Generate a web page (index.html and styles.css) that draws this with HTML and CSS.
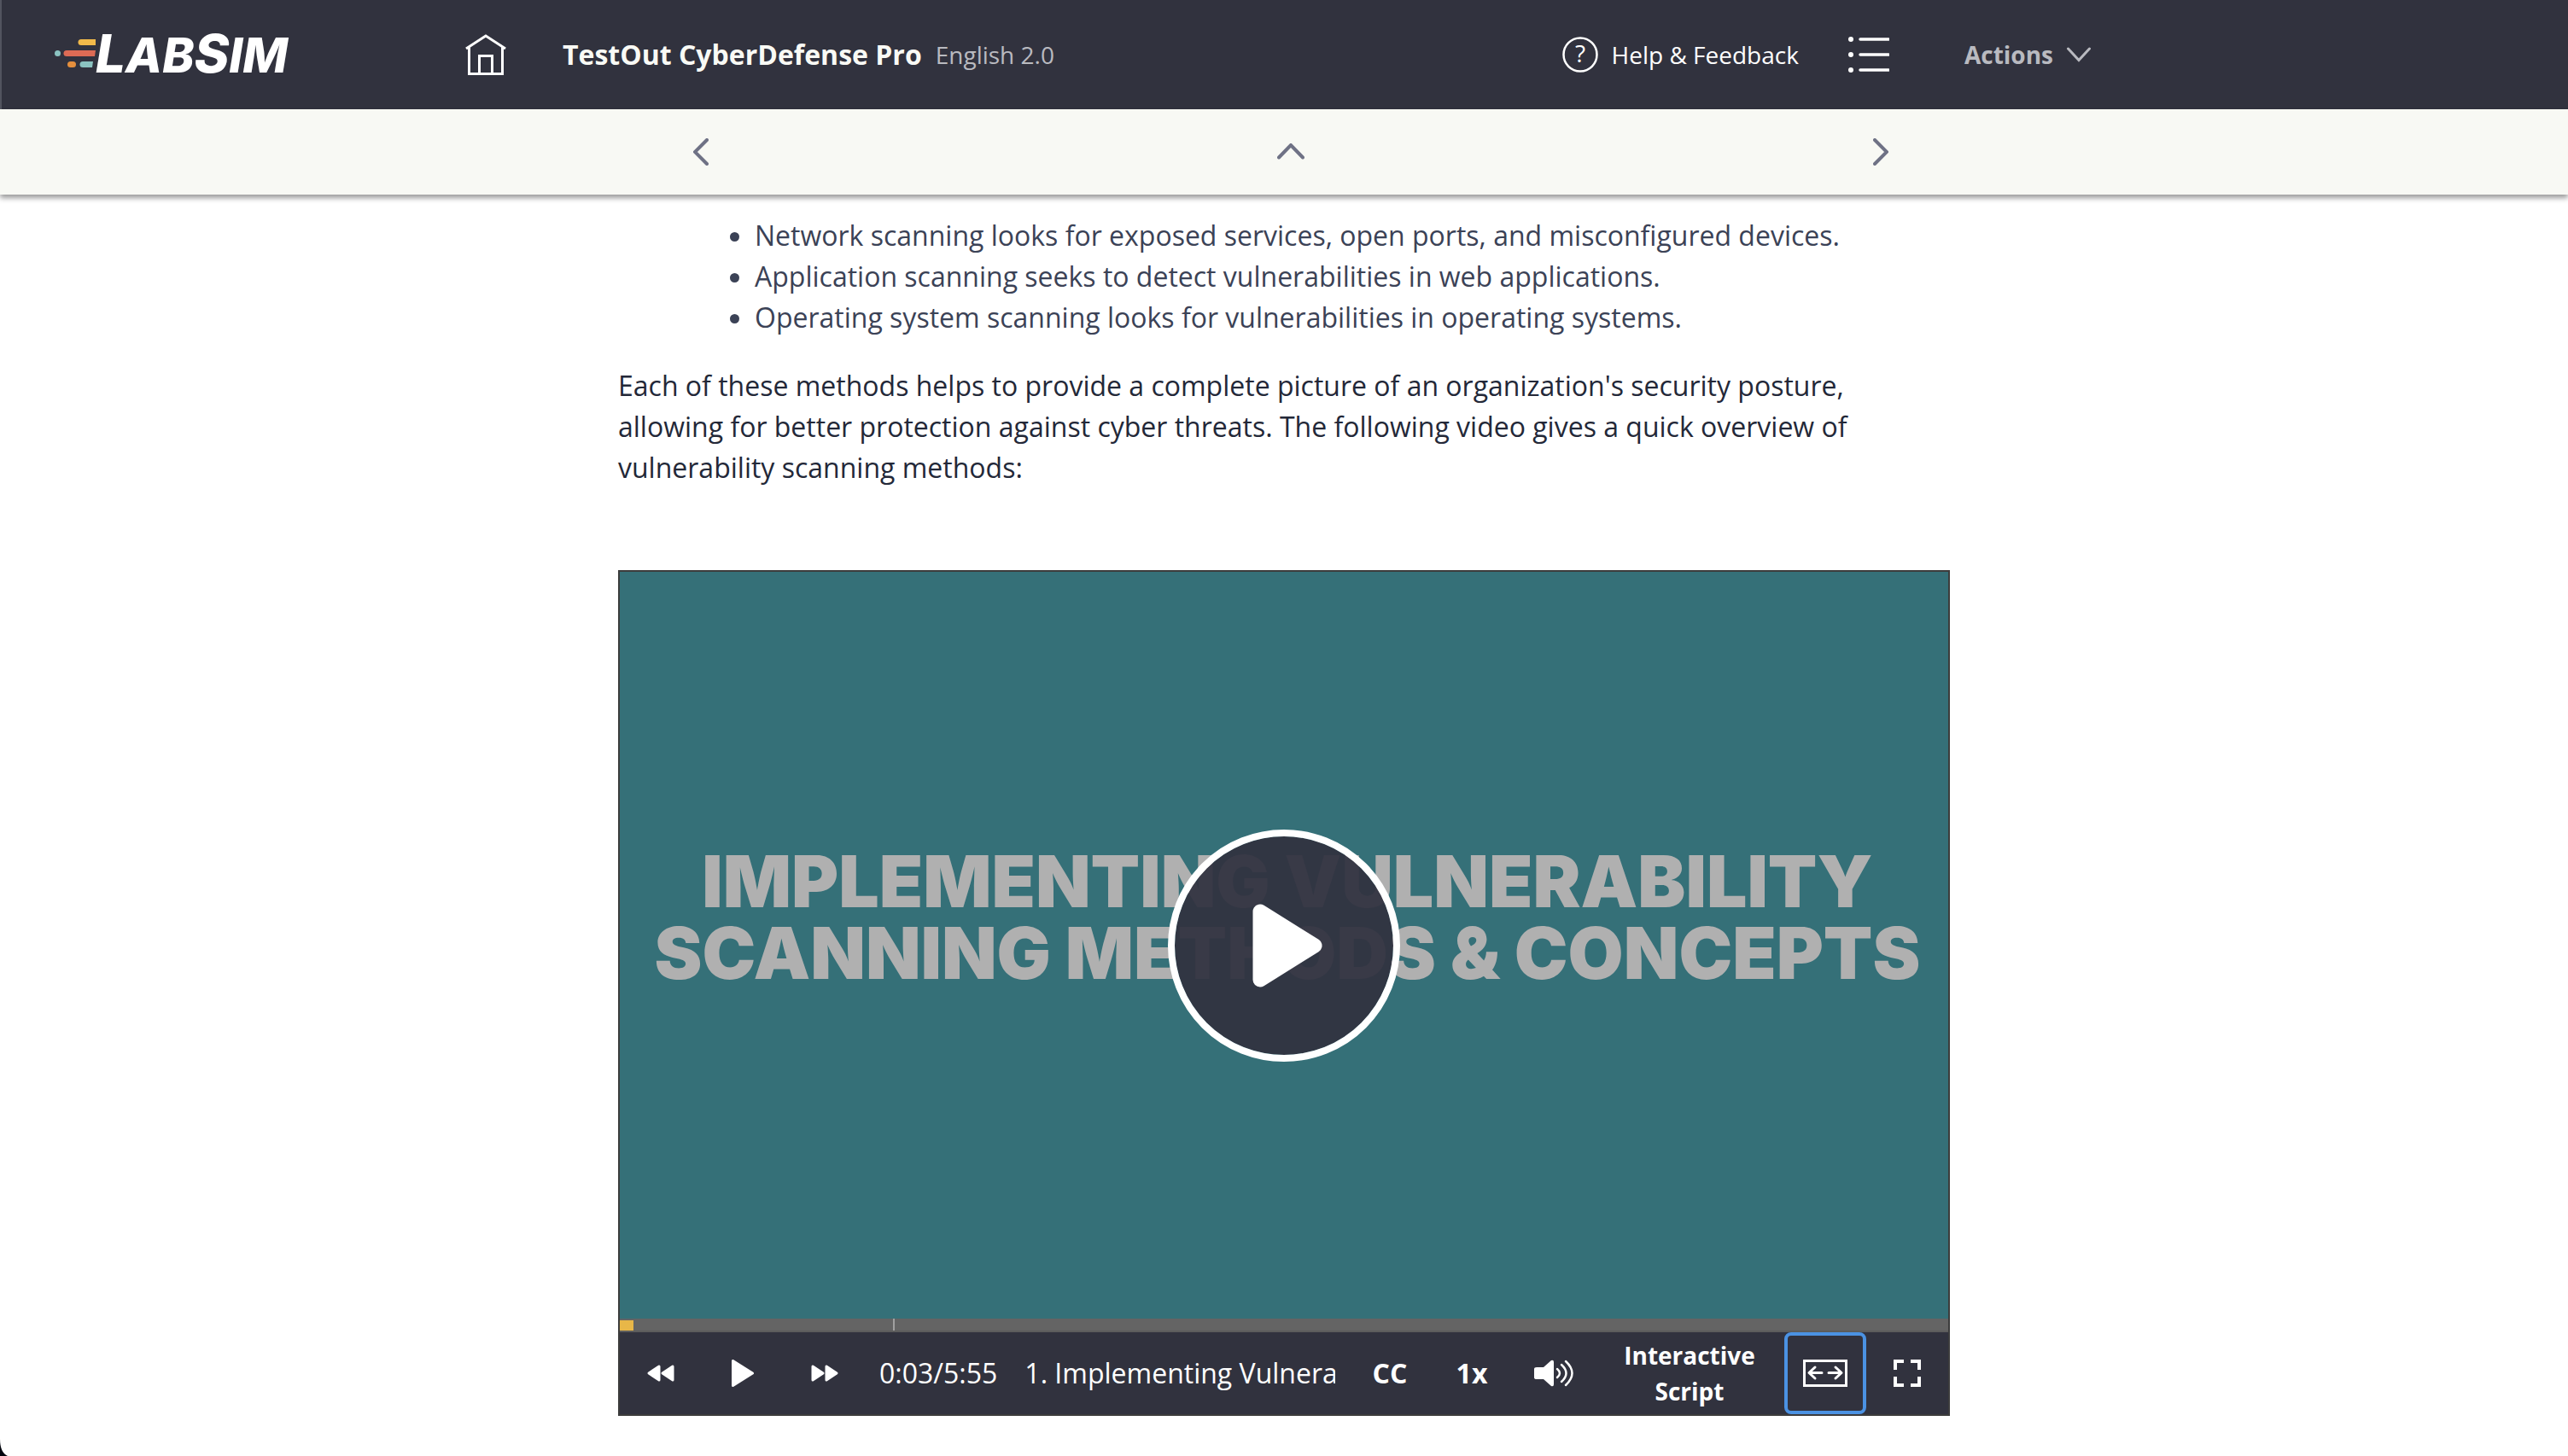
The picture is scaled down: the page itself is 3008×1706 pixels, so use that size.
FILE: index.html
```html
<!DOCTYPE html>
<html lang="en">
<head>
  <meta charset="UTF-8">
  <title>TestOut CyberDefense Pro</title>
  <meta name="viewport" content="width=device-width, initial-scale=1.0">
  <link rel="stylesheet" href="styles.css">
</head>
<body>

<header class="header">
  <a class="logo" href="#" aria-label="LabSim">
    <svg class="logo-lines" width="48" height="48" viewBox="0 0 48 48">
      <path d="M31 6h19l-1 7H31a3.500 3.500 0 0 1 0-7z" fill="#f1b94a"/>
      <path d="M14 19h34l-1 7H14a3.500 3.500 0 0 1 0-7z" fill="#dd6b55"/>
      <circle cx="3.500" cy="22.500" r="3.500" fill="#8bc3c1"/>
      <rect x="15" y="32" width="10" height="7" rx="3.500" fill="#e58f3d"/>
      <path d="M33 32h12l-1 7H33a3.500 3.500 0 0 1 0-7z" fill="#8bc3c1"/>
    </svg>
    <span class="logo-text"><b>L</b>AB<b>S</b>IM</span>
  </a>

  <div class="header-inner">
    <a class="home" href="#" aria-label="Home">
      <svg width="48" height="48" viewBox="0 0 48 48" fill="none" stroke="#fff" stroke-width="3">
        <path d="M1 17L24 2l23 15M4.500 15v31.500h39V15M16.500 46V25.500h15V46"/>
      </svg>
    </a>
    <h1 class="course">TestOut CyberDefense Pro</h1>
    <span class="edition">English 2.0</span>

    <nav class="header-links">
      <a class="help" href="#">
        <svg width="42" height="44" viewBox="0 0 42 44">
          <circle cx="21" cy="22" r="19.500" fill="none" stroke="#fff" stroke-width="2.500"/>
          <text class="help-mark" x="21" y="31" text-anchor="middle">?</text>
        </svg>
        Help &amp; Feedback
      </a>
      <button class="outline" type="button" aria-label="Course outline">
        <svg width="48" height="44" viewBox="0 0 48 44" stroke="#fff" stroke-width="3.500" stroke-linecap="round">
          <path d="M14 4h33M14 22h33M14 40h33"/>
          <g fill="#fff" stroke="none">
            <circle cx="3" cy="4" r="3"/>
            <circle cx="3" cy="22" r="3"/>
            <circle cx="3" cy="40" r="3"/>
          </g>
        </svg>
      </button>
      <button class="actions" type="button">
        Actions
        <svg width="28" height="18" viewBox="0 0 28 18" fill="none" stroke="#b9bac0" stroke-width="3" stroke-linecap="round">
          <path d="M1.500 2L14 15.500L26.500 2"/>
        </svg>
      </button>
    </nav>
  </div>
</header>

<nav class="pager">
  <div class="pager-inner">
    <button type="button" aria-label="Previous">
      <svg width="18" height="32" viewBox="0 0 18 32"><path d="M16 2L2 16l14 14"/></svg>
    </button>
    <button type="button" aria-label="Up">
      <svg width="32" height="20" viewBox="0 0 32 20"><path d="M2 16.500L16 2l14 14.500"/></svg>
    </button>
    <button type="button" aria-label="Next">
      <svg width="18" height="32" viewBox="0 0 18 32"><path d="M2 2l14 14L2 30"/></svg>
    </button>
  </div>
</nav>

<main class="content">
  <ul class="scan-list">
    <li>Network scanning looks for exposed services, open ports, and misconfigured devices.</li>
    <li>Application scanning seeks to detect vulnerabilities in web applications.</li>
    <li>Operating system scanning looks for vulnerabilities in operating systems.</li>
  </ul>
  <p>Each of these methods helps to provide a complete picture of an organization's security posture, allowing for better protection against cyber threats. The following video gives a quick overview of vulnerability scanning methods:</p>

  <section class="player">
    <div class="screen">
      <div class="slide-title">IMPLEMENTING VULNERABILITY<br>SCANNING METHODS &amp; CONCEPTS</div>
      <button class="big-play" type="button" aria-label="Play video">
        <svg width="84" height="100" viewBox="0 0 84 100">
          <path d="M10 10v80L74 50z" fill="#fff" stroke="#fff" stroke-width="17" stroke-linejoin="round"/>
        </svg>
      </button>
    </div>

    <div class="progress">
      <div class="progress-played"></div>
      <div class="progress-mark"></div>
    </div>

    <div class="controls">
      <button class="control" type="button" aria-label="Rewind">
        <svg width="32" height="20" viewBox="0 0 32 20" fill="#fff" stroke="#fff" stroke-width="3" stroke-linejoin="round">
          <path d="M14 2v16L2 10zM30 2v16L18 10z"/>
        </svg>
      </button>
      <button class="control" type="button" aria-label="Play">
        <svg width="26" height="32" viewBox="0 0 26 32" fill="#fff" stroke="#fff" stroke-width="3" stroke-linejoin="round">
          <path d="M1.500 1.500v29L24.500 16z"/>
        </svg>
      </button>
      <button class="control" type="button" aria-label="Forward">
        <svg width="32" height="20" viewBox="0 0 32 20" fill="#fff" stroke="#fff" stroke-width="3" stroke-linejoin="round">
          <path d="M2 2v16l12-8zM18 2v16l12-8z"/>
        </svg>
      </button>
      <span class="time">0:03/5:55</span>
      <span class="track">1. Implementing Vulnera</span>
      <button class="control" type="button">CC</button>
      <button class="control" type="button">1x</button>
      <button class="control" type="button" aria-label="Volume">
        <svg width="46" height="32" viewBox="0 0 46 32" fill="none" stroke="#fff" stroke-width="2.500" stroke-linecap="round">
          <path d="M3 9h8L20 1q3-1 3 2v26q0 3-3 2l-9-8H3q-3 0-3-2V11q0-2 3-2z" fill="#fff" stroke="none"/>
          <path d="M27 11q6 5 0 10M32 6q11 10 0 20M37 2q15 14 0 28"/>
        </svg>
      </button>
      <button class="script" type="button">Interactive Script</button>
      <button class="control focused" type="button" aria-label="Fit width">
        <svg width="52" height="32" viewBox="0 0 52 32" fill="none" stroke="#fff" stroke-width="3">
          <rect x="1.500" y="1.500" width="49" height="29"/>
          <path d="M22 15.500H7.500M14 9l-7 6.500 7 6.500M30 15.500h14.500M38 9l7 6.500-7 6.500" stroke-linecap="round" stroke-linejoin="round"/>
        </svg>
      </button>
      <button class="control" type="button" aria-label="Full screen">
        <svg width="32" height="32" viewBox="0 0 32 32" fill="none" stroke="#fff" stroke-width="4">
          <path d="M2 12V2h10M20 2h10v10M30 20v10H20M12 30H2V20"/>
        </svg>
      </button>
    </div>
  </section>
</main>

<svg class="window-corner" width="10" height="20" viewBox="0 0 10 20">
  <path d="M0 0q0 16 9 20H0z" fill="#04060f"/>
</svg>

</body>
</html>
```

FILE: styles.css
```css
* {
  box-sizing: border-box;
}

body {
  margin: 0;
  font-family: "Open Sans", sans-serif;
  font-size: 32px;
  line-height: 48px;
  color: #232838;
  background: #fff;
}

a {
  color: inherit;
  text-decoration: none;
}

button {
  display: flex;
  align-items: center;
  justify-content: center;
  padding: 0;
  border: 0;
  background: none;
  color: inherit;
  font: inherit;
  cursor: pointer;
}

svg {
  display: block;
  flex: none;
}

/* header */
.header {
  display: grid;
  grid-template-columns: 1fr minmax(0, 1920px) 1fr;
  align-items: center;
  height: 128px;
  border-left: 2px solid #52545f;
  background: #31323e;
  color: #fff;
}

.logo {
  display: flex;
  align-items: center;
  padding-left: 62px;
}

.logo-text {
  font-family: Inter, sans-serif;
  font-size: 56px;
  font-style: italic;
  font-weight: 800;
  line-height: 48px;
}

.logo-text b {
  font-size: 62px;
  font-weight: 800;
}

.header-inner {
  display: flex;
  align-items: center;
  padding: 0 16px 0 0;
}

.course {
  margin: 0 16px 0 66px;
  font-size: 32px;
  font-weight: 700;
  color: #f9faf5;
}

.edition {
  font-size: 28px;
  color: #b9bac0;
}

.header-links {
  display: flex;
  align-items: center;
  margin-left: auto;
  font-size: 28px;
}

.help {
  display: flex;
  align-items: center;
  gap: 16px;
}

.help-mark {
  font-size: 28px;
  fill: #fff;
}

.outline {
  margin: 0 88px 0 58px;
}

.actions {
  gap: 16px;
  font-weight: 700;
  color: #b9bac0;
}

/* previous / up / next */
.pager {
  height: 100px;
  background: #f8f9f4;
  box-shadow: 0 4px 6px rgba(0, 0, 0, 0.4);
}

.pager-inner {
  display: flex;
  align-items: center;
  justify-content: space-between;
  max-width: 1416px;
  height: 100%;
  margin: 0 auto;
  padding-left: 16px;
}

.pager path {
  fill: none;
  stroke: #6f7285;
  stroke-width: 4;
  stroke-linecap: round;
}

/* lesson text */
.content {
  max-width: 1560px;
  margin: 0 auto;
  padding-top: 24px;
}

.scan-list {
  margin: 0;
  padding-left: 160px;
  color: #3b4256;
}

.content p {
  margin: 32px 0 96px;
}

/* video player */
.player {
  border: 2px solid #3c3c3c;
  color: #fff;
}

.screen {
  position: relative;
  display: flex;
  align-items: center;
  justify-content: center;
  aspect-ratio: 16 / 9;
  background: #357078;
}

.slide-title {
  padding: 0 0 66px 8px;
  font-family: Inter, sans-serif;
  font-size: 84px;
  font-weight: 900;
  line-height: 84px;
  text-align: center;
  white-space: nowrap;
  color: #b0b0b0;
}

.big-play {
  position: absolute;
  inset: 0;
  width: 272px;
  height: 272px;
  margin: auto;
  padding-left: 8px;
  border: 8px solid #fff;
  border-radius: 50%;
  background: rgba(49, 50, 64, 0.94);
  background-clip: padding-box;
}

.progress {
  position: relative;
  height: 16px;
  padding-top: 2px;
  border-bottom: 2px solid #5c5c5c;
  background: #646464;
}

.progress-played {
  width: 1%;
  height: 12px;
  background: #e8b748;
}

.progress-mark {
  position: absolute;
  top: 0;
  left: 320px;
  width: 2px;
  height: 14px;
  background: #a0a0a0;
}

.controls {
  display: flex;
  align-items: center;
  height: 96px;
  background: #31323e;
}

.control {
  flex: none;
  width: 96px;
  height: 96px;
  font-weight: 700;
}

.time {
  padding: 0 16px;
}

.track {
  flex: 1;
  min-width: 0;
  margin: 0 16px;
  overflow: hidden;
  white-space: nowrap;
}

.script {
  flex: none;
  width: 222px;
  padding: 0 32px;
  font-size: 28px;
  font-weight: 700;
  line-height: 42px;
}

.focused {
  border: 4px solid #4b92e3;
  border-radius: 8px;
}

/* rounded corner of the window */
.window-corner {
  position: fixed;
  bottom: 0;
  left: 0;
}
```
